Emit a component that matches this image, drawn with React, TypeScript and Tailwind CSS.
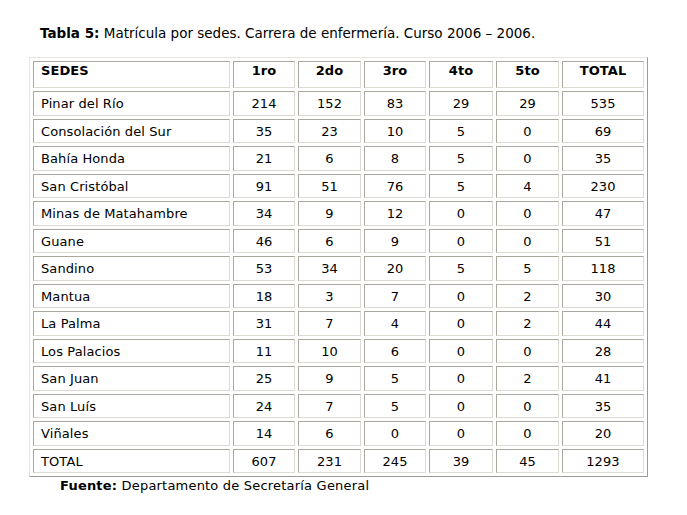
import React from 'react';

// Enrolment by site, nursing programme
const rows: [string, number, number, number, number, number, number][] = [
  ['Pinar del Río', 214, 152, 83, 29, 29, 535],
  ['Consolación del Sur', 35, 23, 10, 5, 0, 69],
  ['Bahía Honda', 21, 6, 8, 5, 0, 35],
  ['San Cristóbal', 91, 51, 76, 5, 4, 230],
  ['Minas de Matahambre', 34, 9, 12, 0, 0, 47],
  ['Guane', 46, 6, 9, 0, 0, 51],
  ['Sandino', 53, 34, 20, 5, 5, 118],
  ['Mantua', 18, 3, 7, 0, 2, 30],
  ['La Palma', 31, 7, 4, 0, 2, 44],
  ['Los Palacios', 11, 10, 6, 0, 0, 28],
  ['San Juan', 25, 9, 5, 0, 2, 41],
  ['San Luís', 24, 7, 5, 0, 0, 35],
  ['Viñales', 14, 6, 0, 0, 0, 20],
  ['TOTAL', 607, 231, 245, 39, 45, 1293],
];

const cols = [
  { label: '1ro', w: 'w-[62px]' },
  { label: '2do', w: 'w-[63px]' },
  { label: '3ro', w: 'w-[62px]' },
  { label: '4to', w: 'w-[64px]' },
  { label: '5to', w: 'w-[63px]' },
  { label: 'TOTAL', w: 'w-[82px]' },
];

const cell = 'border border-t-[#a9a79e] border-l-[#a9a79e] border-b-[#dcdad2] border-r-[#dcdad2]';

export default function App() {
  return (
    <div className="w-[687px] h-[515px] bg-white text-black font-['DejaVu_Sans',Verdana,sans-serif] overflow-hidden">
      <p className="pt-[25px] pl-[40px] text-[13.5px] leading-[16px]">
        <span className="font-bold">Tabla 5:</span> Matrícula por sedes. Carrera de enfermería. Curso 2006 – 2006.
      </p>

      <table className="ml-[29px] mt-[16px] w-[618px] table-fixed border-separate border-spacing-[3px] border border-t-[#e6e4dc] border-l-[#e6e4dc] border-b-[#9d9b95] border-r-[#9d9b95] text-[13px] leading-[15px] tracking-[0.1px]">
        <thead>
          <tr>
            <th className={`${cell} w-[197px] h-[27px] align-top text-left pl-[7px] pt-[1px] font-bold`}>SEDES</th>
            {cols.map(c => (
              <th key={c.label} className={`${cell} ${c.w} h-[27px] align-top text-center pt-[1px] font-bold`}>{c.label}</th>
            ))}
          </tr>
        </thead>
        <tbody>
          {rows.map((r, i) => (
            <tr key={r[0]}>
              <td className={`${cell} ${i % 2 === 0 ? 'h-[25px]' : 'h-[24px]'} pl-[7px] align-middle`}>{r[0]}</td>
              {r.slice(1).map((v, j) => (
                <td key={j} className={`${cell} text-center align-middle`}>{v}</td>
              ))}
            </tr>
          ))}
        </tbody>
      </table>

      <p className="pl-[60px] pt-[1px] text-[13px] leading-[16px] tracking-[0.2px]">
        <span className="font-bold">Fuente:</span> Departamento de Secretaría General
      </p>
    </div>
  );
}
